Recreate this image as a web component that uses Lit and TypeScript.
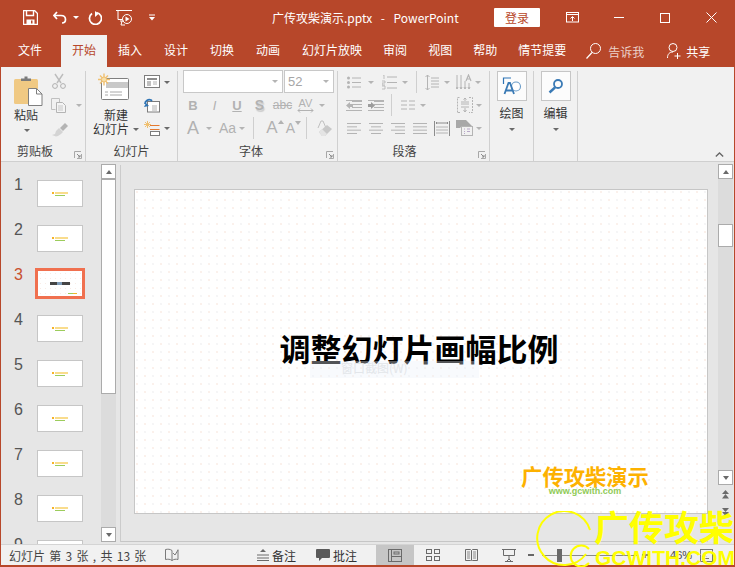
import { LitElement, html, css, svg, unsafeCSS } from 'lit';
import { customElement } from 'lit/decorators.js';

const ic = (w: number, h: number, body: unknown, cls = '') =>
  html`<svg class="ic ${cls}" width=${w} height=${h} viewBox="0 0 ${w} ${h}" fill="none">${body}</svg>`;

const caret = html`<span class="caret"></span>`;
const dim = (m: number) => html`<span class="caret dim m${m}"></span>`;
const at = (m: number, c: unknown) => html`<span class="m${m}">${c}</span>`;
const cell = (w: number, c: unknown) => html`<span class="cell w${w}">${c}</span>`;

// grey lines used by the paragraph buttons
const lines = (x: number, w: number[], step = 3) =>
  w.map((l, i) => svg`<rect x=${x} y=${1 + i * step} width=${l} height="1" fill="#b4b4b4"/>`);

const launcher = html`<svg class="launch" width="8" height="8" viewBox="0 0 8 8" fill="none">
  <path d="M.5 7V.5H7M7.5 3v4.500H3" stroke="#a8a8a8"/><path d="M3 3l3 3M6 4v2H4" stroke="#8a8a8a"/></svg>`;

const TABS = ['插入', '设计', '切换', '动画', '幻灯片放映'];
const TABS2 = ['审阅', '视图', '帮助', '情节提要'];
const THUMBS = [1, 2, 3, 4, 5, 6, 7, 8, 9];

// small spacing and width helpers, m8 = margin-left 8px, w20 = width 20px
const helpers = unsafeCSS(
  Array.from({ length: 80 }, (_, i) => `.m${i}{margin-left:${i}px}.w${i}{width:${i}px}`).join('')
);

@customElement('app-root')
export class AppRoot extends LitElement {
  static styles = css`
    :host {
      display: block;
      width: 735px;
      height: 567px;
      overflow: hidden;
      position: relative;
      font-family: "Noto Sans CJK SC", "Liberation Sans", sans-serif;
      font-size: 12px;
      color: #333;
      background: #e6e6e6;
    }
    ${helpers}
    .win {
      width: 735px;
      height: 567px;
      box-sizing: border-box;
      border: 1px solid #b7472a;
      border-bottom-width: 2px;
      display: flex;
      flex-direction: column;
    }
    svg { display: block; flex: none; }

    /* title bar */
    .title {
      height: 33px;
      background: #b7472a;
      display: flex;
      align-items: center;
      color: #fff;
      flex: none;
    }
    .qat { display: flex; align-items: center; padding-left: 22px; }
    .caret.white { border-top-color: #fff; }
    .doc { margin-left: 117px; font-size: 12px; white-space: pre; width: 200px; word-spacing: 1.6px; }
    .login {
      margin-left: 22px;
      width: 46px;
      height: 19px;
      background: #fff;
      color: #b7472a;
      border-radius: 1px;
      text-align: center;
      line-height: 19px;
      font-size: 12px;
    }
    .winbtn { display: flex; align-items: center; margin-left: 26px; }

    /* tabs */
    .tabs {
      height: 33px;
      background: #b7472a;
      display: flex;
      align-items: flex-end;
      color: #fff;
      flex: none;
      padding-left: 6px;
    }
    .tab { padding: 0 11px; height: 32px; line-height: 30px; white-space: nowrap; }
    .tab.tight { margin-left: -1px; }
    .tab.on { background: #f1f1f1; color: #b7472a; margin-left: 8px; }
    .tabs .tell { display: flex; align-items: center; gap: 7px; height: 32px; margin-left: 9px; color: #ecd2ca; }
    .tabs .share { display: flex; align-items: center; gap: 5px; height: 32px; margin-left: 23px; }

    /* ribbon */
    .ribbon {
      height: 94px;
      background: #f1f1f1;
      border-bottom: 1px solid #cfcfcf;
      display: flex;
      flex: none;
      position: relative;
    }
    .grp {
      position: relative;
      height: 90px;
      margin-top: 4px;
      border-right: 1px solid #d0d0d0;
      box-sizing: border-box;
      display: flex;
      flex-direction: column;
    }
    .grp .body { height: 72px; display: flex; }
    .grp .lbl { text-align: center; line-height: 16px; height: 16px; color: #444; font-size: 12px; }
    .clip .lbl { margin-right: 16px; }
    .font .lbl { margin-right: 18px; }
    .para .lbl { margin-right: 26px; }
    .launch { position: absolute; right: 3px; bottom: 2px; }
    .caret {
      display: inline-block;
      width: 0;
      height: 0;
      border-left: 3px solid transparent;
      border-right: 3px solid transparent;
      border-top: 3px solid #6a6a6a;
      flex: none;
    }
    .caret.dim { border-top-color: #b4b4b4; }

    .clip { width: 85px; }
    .big { display: flex; flex-direction: column; align-items: center; }
    .big .t { line-height: 14px; color: #333; white-space: nowrap; display: flex; align-items: center; gap: 4px; }
    .paste { width: 40px; margin-left: 13px; padding-top: 5px; align-items: flex-start; }
    .paste .t { margin-top: 2px; }
    .paste .caret { margin-top: 7px; margin-left: 10px; }
    .stack { display: flex; flex-direction: column; }
    .clip .stack { margin-left: -3px; padding-top: 2px; gap: 9px; }
    .row { display: flex; align-items: center; gap: 9px; }

    .slides { width: 92px; }
    .newslide { width: 56px; padding-top: 2px; padding-left: 2px; }
    .newslide svg { margin-left: -6px; }
    .newslide .t.first { margin-top: 8px; }
    .slides .stack { padding-top: 4px; gap: 9px; }
    .slides .row { gap: 3px; }
    .slides .row.last { margin-top: -1px; }

    .font { width: 160px; padding-left: 5px; }
    .font .body { flex-direction: column; }
    .combos { display: flex; height: 23px; gap: 1px; margin-top: -1px; }
    .combo {
      background: #fff;
      border: 1px solid #c8c8c8;
      box-sizing: border-box;
      height: 23px;
      display: flex;
      align-items: center;
      justify-content: flex-end;
      padding-right: 4px;
      color: #a6a6a6;
      font-family: "Liberation Sans", sans-serif;
      font-size: 13px;
    }
    .combo.name { width: 100px; }
    .combo.size { width: 50px; justify-content: space-between; padding-left: 3px; }
    .f2 { display: flex; align-items: center; height: 20px; margin-top: 2px; color: #b2b2b2; font-family: "Liberation Sans", sans-serif; font-weight: bold; font-size: 13px; }
    .f3 { display: flex; align-items: center; height: 22px; margin-top: 2px; color: #b2b2b2; font-family: "Liberation Sans", sans-serif; }
    .cell { display: flex; align-items: center; justify-content: center; flex: none; }
    .vsep { width: 1px; background: #cfcfcf; height: 22px; flex: none; }
    .ital { font-style: italic; font-weight: 400; }
    .shad { text-shadow: 1px 2px 1px #ccc; font-size: 14px; }
    .strike { font-weight: 400; font-size: 12px; }
    .av { display: flex; flex-direction: column; align-items: center; font-weight: 400; font-size: 11px; line-height: 10px; }
    .a18 { font-size: 18px; }
    .a17 { font-size: 17px; }
    .a14 { font-size: 14px; }
    .up.tiny { border-bottom-color: #b2b2b2; margin-top: -12px; }
    .dn.tiny { border-top-color: #b2b2b2; margin-top: -10px; }
    .f3 .cm { margin-left: -4px; }

    .para { width: 152px; padding-left: 8px; }
    .para .body { flex-direction: column; }
    .p { display: flex; align-items: center; height: 22px; flex: none; }
    .p.next { margin-top: 1px; }
    .p.in1 { padding-left: 1px; }

    .single { width: 44px; display: flex; flex-direction: column; align-items: center; }
    .tile {
      width: 30px;
      height: 30px;
      box-sizing: border-box;
      background: #fcfcfc;
      border: 1px solid #c6c6c6;
      display: flex;
      align-items: center;
      justify-content: center;
    }
    .single .t { margin-top: 3px; line-height: 18px; color: #333; font-size: 12px; }
    .single .caret { margin-top: 6px; }
    .collapse { position: absolute; right: 10px; bottom: 4px; }

    /* work area */
    .work { flex: 1; display: flex; min-height: 0; background: #e6e6e6; }
    .list { width: 100px; overflow: hidden; flex: none; padding-top: 18px; box-sizing: border-box; }
    .th { height: 45px; display: flex; align-items: flex-start; }
    .th .n {
      width: 36px;
      padding-left: 13px;
      box-sizing: border-box;
      font-family: "Liberation Sans", sans-serif;
      font-size: 16px;
      line-height: 10px;
      color: #555;
    }
    .th .pg {
      width: 46px;
      height: 27px;
      box-sizing: border-box;
      background: #fff;
      border: 1px solid #c6c6c6;
      display: flex;
      flex-direction: column;
      align-items: center;
      justify-content: center;
      gap: 1px;
    }
    .mark { width: 16px; height: 2px; background: linear-gradient(90deg, #f5b428 0 2px, transparent 2px 3px, #f9dc8c 3px 100%); }
    .mark2 { width: 10px; height: 1px; background: #9ccc5c; }
    .th.cur { margin-top: -2px; margin-bottom: 2px; }
    .th.cur .n { color: #c8502f; width: 34px; padding-top: 2px; }
    .th.cur .pg {
      width: 50px;
      height: 31px;
      border: 3px solid #f0704f;
      position: relative;
      background: #fff radial-gradient(#f8ece6 0.5px, transparent 0.7px) 0 0 / 5px 5px;
    }
    .mark3 { width: 20px; height: 3px; background: linear-gradient(90deg, #444 0 7px, #7f9cb8 7px 12px, #444 12px 100%); }
    .mark4 { position: absolute; right: 5px; bottom: 2px; width: 9px; height: 1px; background: linear-gradient(90deg, #9ccc5c 50%, #f0b82c 50%); }

    .sb {
      width: 15px;
      flex: none;
      display: flex;
      flex-direction: column;
      background: #dcdcdc;
    }
    .sbtn {
      height: 15px;
      background: #fff;
      border: 1px solid #ababab;
      box-sizing: border-box;
      display: flex;
      align-items: center;
      justify-content: center;
      flex: none;
    }
    .up { border-left: 3px solid transparent; border-right: 3px solid transparent; border-bottom: 4px solid #6a6a6a; width: 0; height: 0; }
    .dn { border-left: 3px solid transparent; border-right: 3px solid transparent; border-top: 4px solid #6a6a6a; width: 0; height: 0; }
    .thumb { background: #fff; border: 1px solid #ababab; box-sizing: border-box; flex: none; }
    .fill { flex: 1; }
    .panelsb { margin-top: 2px; height: 378px; }
    .panelsb .thumb { height: 215px; }
    .mid {
      flex: 1;
      border-left: 1px solid #cbcbcb;
      border-bottom: 1px solid #c6c6c6;
      margin: 3px 0 2px 4px;
      padding: 24px 0 0 13px;
      display: flex;
      flex-direction: column;
    }
    .slide {
      width: 574px;
      height: 325px;
      box-sizing: border-box;
      border: 1px solid #c6c6c6;
      background:
        radial-gradient(circle at 2px 2px, #f9e9e1 0.6px, transparent 0.9px) 0 0 / 16px 16px,
        radial-gradient(circle at 10px 2px, #f0f0f2 0.6px, transparent 0.9px) 0 0 / 16px 16px,
        radial-gradient(circle at 2px 10px, #f0f0f2 0.6px, transparent 0.9px) 0 0 / 16px 16px,
        radial-gradient(circle at 10px 10px, #f9e9e1 0.6px, transparent 0.9px) 0 0 / 16px 16px,
        #fff;
      position: relative;
      display: flex;
      flex-direction: column;
      align-items: center;
    }
    .head {
      margin-top: 136px;
      font-size: 31px;
      font-weight: 700;
      line-height: 44px;
      color: #000;
      margin-left: -4px;
    }
    .ghost {
      position: absolute;
      left: 175px;
      top: 171px;
      width: 169px;
      height: 17px;
      background: rgba(235, 241, 250, 0.35);
      color: #e3e6ea;
      font-size: 12px;
      line-height: 13px;
      padding-left: 31px;
      box-sizing: border-box;
    }
    .logo { position: absolute; left: 386px; top: 272px; width: 128px; text-align: center; }
    .logo .a { color: #fdb100; font-size: 21.3px; font-weight: 700; line-height: 28px; white-space: nowrap; }
    .logo .b { color: #8fca55; font: bold 9px/9px "Liberation Sans", sans-serif; margin-top: -3px; }
    .rsb { margin: 2px 1px 0 10px; height: 378px; }
    .rsb .thumb { height: 23px; margin-top: 45px; }
    .rsb .pager {
      height: 57px;
      background: #e6e6e6;
      display: flex;
      flex-direction: column;
      align-items: center;
      gap: 9px;
      padding-top: 5px;
      box-sizing: border-box;
      flex: none;
    }

    /* status bar */
    .status {
      height: 21px;
      background: #f1f1f1;
      flex: none;
      display: flex;
      align-items: center;
      color: #444;
      font-size: 11px;
      padding-left: 8px;
      border-top: 1px solid #d4d4d4;
      box-sizing: border-box;
    }
    .status .txt { width: 156px; white-space: pre; font-size: 12px; word-spacing: 1.6px; }
    .status .note { display: flex; align-items: center; gap: 3px; color: #333; font-size: 12px; }
    .vbtn { height: 20px; width: 38px; display: flex; align-items: center; justify-content: center; flex: none; }
    .vbtn.on { background: #c6c6c6; }
    .slider { width: 97px; height: 1px; background: #8a8a8a; position: relative; margin: 0 3px 0 8px; }
    .slider i { position: absolute; left: 15px; top: -6px; width: 5px; height: 13px; background: #6a6a6a; }
    .pct { margin-left: 22px; width: 30px; font: 11px "Liberation Sans", sans-serif; }

    /* watermark that lies over the window */
    .wm { position: absolute; left: 536px; top: 511px; width: 199px; height: 56px; color: #ffff00; pointer-events: none; }
    .wm .ring { position: absolute; left: 0; top: 0; }
    .wm .big1 { position: absolute; left: 58px; top: -10px; font-size: 35px; font-weight: 700; line-height: 50px; white-space: nowrap; }
    .wm .big2 { position: absolute; left: 59px; top: 36px; font: bold 21px/21px "Liberation Sans", sans-serif; white-space: nowrap; }
  `;

  private clipboard() {
    return html`<div class="grp clip"><div class="body">
      <div class="big paste">
        ${ic(29, 30, svg`
          <rect x="0" y="3" width="24" height="25" rx="1.5" fill="#f0c983"/>
          <path d="M7 5V2.5h3.5V0.5h3V2.5H17V5z" fill="#7b7b7b"/>
          <path d="M14.5 12.5h8l5.5 5.5v11.5H14.5z" fill="#fff" stroke="#7f7f7f"/>
          <path d="M22.5 12.5v5.5h5.5" stroke="#7f7f7f"/>`)}
        <span class="t">粘贴</span>${caret}
      </div>
      <div class="stack">
        ${ic(16, 16, svg`<path d="M4 1l6 9M12 1l-6 9" stroke="#bcbcbc" stroke-width="1.4"/><circle cx="4" cy="13" r="2.4" stroke="#b0b0b0"/><circle cx="12" cy="13" r="2.4" stroke="#b0b0b0"/>`)}
        <div class="row">
          ${ic(16, 15, svg`<path d="M.5.5h8l0 4M.5.5v11h4" stroke="#c0c0c0"/><path d="M5.5 4.5h6l3 3v7h-9z" fill="#f4f4f4" stroke="#b4b4b4"/><path d="M7 8h5M7 10h5M7 12h5" stroke="#c8c8c8"/>`)}
          <span class="caret dim"></span>
        </div>
        ${ic(17, 15, svg`<path d="M9 6l5-5 3 3-5 5z" fill="#b4b4b4"/><path d="M8 6l4 4-2 2-3 2-2 .5-4-1.5 3-1 1-3z" fill="#d4d4d4"/>`)}
      </div>
    </div><div class="lbl">剪贴板</div>${launcher}</div>`;
  }

  private slideGroup() {
    return html`<div class="grp slides"><div class="body">
      <div class="big newslide">
        ${ic(31, 27, svg`
          <rect x="3.5" y="5.5" width="27" height="21" rx="1" fill="#fff" stroke="#7f7f7f"/>
          <rect x="8" y="9" width="22" height="6" fill="#c9c9c9"/>
          <path d="M7 19h3M12 19h12M7 22h3M12 22h12" stroke="#a8a8a8"/>
          <g stroke="#f0c070" stroke-width="1.4"><path d="M6 .5v12M0 6.500h12M2 2.500l8 8M10 2.500l-8 8"/></g>
          <circle cx="6" cy="6.500" r="2.500" fill="#f8dfa8" stroke="#f0c070"/>`)}
        <span class="t first">新建</span>
        <span class="t">幻灯片 ${caret}</span>
      </div>
      <div class="stack">
        <div class="row">
          ${ic(17, 14, svg`<rect x=".5" y=".5" width="15" height="12" fill="#fff" stroke="#7c7c7c"/><rect x="3" y="3" width="10" height="2" fill="#8c8c8c"/><rect x="3" y="6" width="4" height="5" fill="#c0c0c0"/><path d="M9 7h4M9 9h4" stroke="#b0b0b0"/>`)}
          <span class="caret"></span>
        </div>
        ${ic(17, 15, svg`<rect x="3.500" y="3.500" width="12" height="10.500" fill="#fff" stroke="#7c7c7c"/><path d="M8 8h5M8 10h5M8 12h5" stroke="#b0b0b0"/><path d="M1 6c0-3 3-5 6-4l1 1" stroke="#2e74b5" stroke-width="1.800"/><path d="M0 9l5-1-3-3z" fill="#2e74b5"/>`)}
        <div class="row last">
          ${ic(17, 15, svg`<path d="M3.500 0v7M0 3.500h7M1 1l5 5M6 1l-5 5" stroke="#f0c070"/><path d="M6 4.500h9.500M6 8.500h9.500" stroke="#e57a30" stroke-width="1.200"/><rect x="6.500" y="10.500" width="9" height="4" fill="#fff" stroke="#7c7c7c"/>`)}
          <span class="caret"></span>
        </div>
      </div>
    </div><div class="lbl">幻灯片</div></div>`;
  }

  private fontGroup() {
    return html`<div class="grp font"><div class="body">
      <div class="combos">
        <div class="combo name"><span class="caret dim"></span></div>
        <div class="combo size"><span>52</span><span class="caret dim"></span></div>
      </div>
      <div class="f2">
        ${cell(20, 'B')}
        ${cell(23, html`<span class="ital">I</span>`)}
        ${cell(22, html`<u>U</u>`)}
        ${cell(23, html`<span class="shad">S</span>`)}
        ${cell(23, html`<s class="strike">abc</s>`)}
        ${cell(23, html`<span class="av">AV
          ${ic(17, 5, svg`<path d="M1 2.500h15M3 .5L1 2.500l2 2M14 .5l2 2-2 2" stroke="#b2b2b2"/>`)}</span>`)}
        ${dim(2)}
      </div>
      <div class="f3">
        ${cell(20, html`<span class="a18">A</span>`)}
        ${dim(3)}
        ${cell(31, html`<span class="a14">Aa</span>`)}
        <span class="caret dim cm"></span>
        <span class="vsep m8"></span>
        <span class="cell w20 m11"><span class="a17">A</span><span class="up tiny"></span></span>
        <span class="cell w13 m2"><span class="a14">A</span><span class="dn tiny"></span></span>
        <span class="vsep m6"></span>
        ${at(9, ic(16, 16, svg`<path d="M2 8l3-7 2 0 3 7" stroke="#c0c0c0"/><path d="M3 12l8-7 5 4-7 7H6z" fill="#c8c8c8"/><path d="M3 12l3-3 5 5-2 2H6z" fill="#e4e4e4"/>`))}
      </div>
    </div><div class="lbl">字体</div>${launcher}</div>`;
  }

  private paraGroup() {
    const bullets = ic(14, 13, svg`<circle cx="1.500" cy="2" r="1.500" fill="#b4b4b4"/><circle cx="1.500" cy="6.500" r="1.500" fill="#b4b4b4"/><circle cx="1.500" cy="11" r="1.500" fill="#b4b4b4"/><path d="M5 2h9M5 6.500h9M5 11h9" stroke="#b4b4b4"/>`);
    const numbered = ic(15, 15, svg`<path d="M5 2h10M5 7.500h10M5 13h10" stroke="#b4b4b4"/><path d="M1 0h1v4M0 6h3v2H0v2h3M0 11h3v3H0" stroke="#b4b4b4" stroke-width=".8"/>`);
    const spacing = ic(14, 17, svg`<path d="M2.500 1v15M.5 3l2-2 2 2M.5 14l2 2 2-2" stroke="#b4b4b4"/><path d="M6 4h8M6 7h8M6 10h8M6 13h8" stroke="#b4b4b4"/>`);
    const direction = ic(16, 17, svg`<path d="M1 1v14M5 1v14M9 7v8M0 13l1 2 1-2M4 13l1 2 1-2M8 13l1 2 1-2" stroke="#b4b4b4"/><path d="M10 7l2.500-6 2.500 6M11 5h3" stroke="#b4b4b4" stroke-width="1.200"/><path d="M13 9v6M12 13l1 2 1-2" stroke="#b4b4b4"/>`);
    const outdent = ic(16, 11, svg`${lines(6, [10, 10, 10, 10])}<rect x="0" y="0" width="16" height="1" fill="#b4b4b4"/><rect x="0" y="10" width="16" height="1" fill="#b4b4b4"/><path d="M0 5.500L4 2v2h3v3H4v2z" fill="#b4b4b4"/>`);
    const indent = ic(16, 11, svg`${lines(6, [10, 10, 10, 10])}<rect x="0" y="0" width="16" height="1" fill="#b4b4b4"/><rect x="0" y="10" width="16" height="1" fill="#b4b4b4"/><path d="M7 5.500L3 2v2H0v3h3v2z" fill="#9c9c9c"/>`);
    const cols = ic(14, 10, svg`<path d="M0 1h6M8 1h6M0 5h6M8 5h6M0 9h6M8 9h6" stroke="#b4b4b4"/>`);
    const valign = ic(16, 16, svg`<path d="M.5 15.500V.5h3M12 .5h3.500v15H12M3 15.500H.5" stroke="#b4b4b4" stroke-dasharray="2 1"/><path d="M4 5h8M4 7h8M4 10h8M8 1v3M6.500 2.500L8 1l1.500 1.500M8 15v-4M6.500 13L8 15l1.500-2" stroke="#b4b4b4"/>`);
    const al = (w: number[], x: number[]) => ic(15, 11, w.map((l, i) => svg`<rect x=${x[i]} y=${i * 3.33} width=${l} height="1" fill="#b4b4b4"/>`));
    const dist = ic(16, 15, svg`<path d="M.5 0v15M15.500 0v15" stroke="#8c8c8c"/><path d="M3 2h10M3 1l-1 1 1 1M13 1l1 1-1 1" stroke="#8c8c8c"/><path d="M2 6h12M2 9h12M2 12h12" stroke="#b4b4b4"/>`);
    const art = ic(17, 16, svg`<path d="M0 0h10l6 6H6L4 8H0z" fill="#a8a8a8"/><rect x="5.500" y="6.500" width="11" height="9" fill="#f1f1f1" stroke="#b4b4b4"/><path d="M8 9h1M11 9h3M8 11.500h1M11 11.500h3M8 13.500h1" stroke="#b8a8c8"/>`);
    return html`<div class="grp para"><div class="body">
      <div class="p in1">
        ${bullets}${dim(7)}${at(8, numbered)}${dim(5)}
        <span class="vsep m8"></span>
        ${at(8, spacing)}${dim(5)}
        ${at(6, direction)}${dim(3)}
      </div>
      <div class="p next">
        ${outdent}${at(6, indent)}
        <span class="vsep m7"></span>
        ${at(9, cols)}${dim(5)}
        ${at(31, valign)}${dim(3)}
      </div>
      <div class="p next in1">
        ${al([14, 10, 14, 10], [0, 0, 0, 0])}
        ${at(7, al([14, 10, 14, 10], [0, 2, 0, 2]))}
        ${at(7, al([14, 10, 14, 10], [0, 4, 0, 4]))}
        ${at(7, al([14, 14, 14, 14], [0, 0, 0, 0]))}
        ${at(6, dist)}
        ${at(6, art)}${dim(3)}
      </div>
    </div><div class="lbl">段落</div>${launcher}</div>`;
  }

  render() {
    return html`
      <div class="win">
        <div class="title">
          <div class="qat">
            ${ic(15, 15, svg`<path d="M.5.5h11l3 3v11H.5z" stroke="#fff" stroke-width="1.400"/><path d="M3.500 1v4.500h7V1" stroke="#fff" stroke-width="1.400"/><rect x="3.500" y="9.500" width="8" height="5" fill="#fff"/><rect x="8" y="10.500" width="1.500" height="3" fill="#b7472a"/>`)}
            ${at(15, ic(14, 13, svg`<path d="M4 1L1 4.500 4 8" stroke="#fff" stroke-width="1.700"/><path d="M1.500 4.500H8c3 0 4.500 2 4.500 4S11 12 9 12" stroke="#fff" stroke-width="1.700"/>`))}
            <span class="caret white m6"></span>
            ${at(9, ic(14, 14, svg`<path d="M4 2.500A6 6 0 1 0 8.500 1.500" stroke="#fff" stroke-width="1.700"/><path d="M7 0v6l3.500-3z" fill="#fff"/>`))}
            ${at(14, ic(17, 16, svg`<path d="M0 .5h16M2 .5v9h4" stroke="#fff"/><path d="M4 11h4M5 15h4M6 11l-1 4" stroke="#fff"/><circle cx="11" cy="9" r="4.500" stroke="#fff"/><path d="M9.500 6.500v5l4-2.500z" fill="#fff"/>`))}
            ${at(16, ic(6, 7, svg`<path d="M0 1h6" stroke="#fff"/><path d="M0 3h6L3 6.500z" fill="#fff"/>`))}
          </div>
          <div class="doc">广传攻柴演示.pptx  -  PowerPoint</div>
          <div class="login">登录</div>
          <div class="winbtn">
            ${ic(13, 11, svg`<rect x=".5" y=".5" width="12" height="9.500" stroke="#fff"/><path d="M.5 2.500h12" stroke="#fff"/><path d="M6.500 9V5M4.500 6.500l2-2 2 2" stroke="#fff"/>`)}
            ${at(35, ic(10, 1, svg`<rect width="10" height="1" fill="#fff"/>`))}
            ${at(36, ic(10, 10, svg`<rect x=".5" y=".5" width="9" height="9" stroke="#fff"/>`))}
            ${at(36, ic(11, 11, svg`<path d="M.5.5l10 10M10.500.5l-10 10" stroke="#fff"/>`))}
          </div>
        </div>
        <div class="tabs">
          <div class="tab">文件</div>
          <div class="tab on">开始</div>
          ${TABS.map(t => html`<div class="tab">${t}</div>`)}
          ${TABS2.map(t => html`<div class="tab tight">${t}</div>`)}
          <div class="tell">
            ${ic(15, 16, svg`<circle cx="9.500" cy="5.500" r="5" stroke="#fff"/><path d="M6 9.500L.5 15.500" stroke="#fff" stroke-width="1.200"/>`)}
            <span>告诉我</span>
          </div>
          <div class="share">
            ${ic(14, 16, svg`<circle cx="6" cy="4.500" r="4" stroke="#fff"/><path d="M.5 15c0-4 2-6 5.500-6" stroke="#fff"/><path d="M10.500 10v6M7.500 13h6" stroke="#fff"/>`)}
            <span>共享</span>
          </div>
        </div>
        <div class="ribbon">
          ${this.clipboard()}
          ${this.slideGroup()}
          ${this.fontGroup()}
          ${this.paraGroup()}
          <div class="grp single">
            <div class="tile">${ic(20, 18, svg`<path d="M1.500 7V1H9" stroke="#2e74b5" stroke-width="1.200"/><circle cx="14" cy="9.500" r="4.500" fill="#fff" stroke="#6a9cc8" stroke-width="1.100"/><path d="M2.500 17L6.500 6h1.500l4 11M4 13.500h7" stroke="#3a7ab5" stroke-width="1.800"/>`)}</div>
            <span class="t">绘图</span>${caret}
          </div>
          <div class="grp single">
            <div class="tile">${ic(16, 16, svg`<circle cx="10" cy="6" r="4" stroke="#3a7ab5" stroke-width="1.800"/><path d="M7 9.500L1.500 14.500" stroke="#3a7ab5" stroke-width="2.400"/>`)}</div>
            <span class="t">编辑</span>${caret}
          </div>
          <div class="collapse">${ic(9, 5, svg`<path d="M.8 4.500L4.500 1l3.700 3.500" stroke="#666" stroke-width="1.300"/>`)}</div>
        </div>
        <div class="work">
          <div class="list">
            ${THUMBS.map(n => n === 3
              ? html`<div class="th cur"><span class="n">${n}</span><div class="pg"><span class="mark3"></span><span class="mark4"></span></div></div>`
              : html`<div class="th"><span class="n">${n}</span><div class="pg"><span class="mark"></span><span class="mark2"></span></div></div>`)}
          </div>
          <div class="sb panelsb">
            <div class="sbtn"><span class="up"></span></div>
            <div class="thumb"></div>
            <div class="fill"></div>
            <div class="sbtn"><span class="dn"></span></div>
          </div>
          <div class="mid">
            <div class="slide">
              <div class="ghost">窗口截图(W)</div>
              <div class="head">调整幻灯片画幅比例</div>
              <div class="logo">
                <div class="a">广传攻柴演示</div>
                <div class="b">www.gcwith.com</div>
              </div>
            </div>
          </div>
          <div class="sb rsb">
            <div class="sbtn"><span class="up"></span></div>
            <div class="thumb"></div>
            <div class="fill"></div>
            <div class="sbtn"><span class="dn"></span></div>
            <div class="pager">
              ${ic(7, 9, svg`<path d="M0 4L3.500 0 7 4zM0 8.500h7L3.500 4z" fill="#6a6a6a"/>`)}
              ${ic(7, 9, svg`<path d="M0 0h7L3.500 4zM0 4h7L3.500 8z" fill="#6a6a6a"/>`)}
            </div>
          </div>
        </div>
        <div class="status">
          <span class="txt">幻灯片 第 3 张 , 共 13 张</span>
          ${ic(14, 14, svg`<path d="M7 2.500C5 1 3 1 .5 1.500v10c2.500-.5 4.500-.5 6.500 1 2-1.500 4-1.500 6-1V1.500" stroke="#7a7a7a"/><path d="M7 2.500v10M8 5l2 2 3-5" stroke="#7a7a7a"/>`)}
          <span class="note m78">
            ${ic(12, 12, svg`<path d="M3 3l3-3 3 3z" fill="#6a6a6a"/><path d="M0 6h12M0 9h12M0 11.500h12" stroke="#6a6a6a"/>`)}备注
          </span>
          <span class="note m20">
            ${ic(14, 14, svg`<path d="M1 1h12a1 1 0 0 1 1 1v7a1 1 0 0 1-1 1H6l-3 3v-3H1a1 1 0 0 1-1-1V2a1 1 0 0 1 1-1z" fill="#5a5a5a"/>`)}批注
          </span>
          <div class="vbtn on m19">${ic(14, 13, svg`<rect x=".5" y=".5" width="13" height="12" stroke="#6a6a6a"/><path d="M3.500 .5v12M3.500 7.500h10" stroke="#6a6a6a"/><rect x="6" y="3" width="5" height="2" stroke="#6a6a6a"/>`)}</div>
          <div class="vbtn">${ic(14, 12, svg`<rect x=".5" y=".5" width="5" height="4" stroke="#6a6a6a"/><rect x="8.500" y=".5" width="5" height="4" stroke="#6a6a6a"/><rect x=".5" y="7.500" width="5" height="4" stroke="#6a6a6a"/><rect x="8.500" y="7.500" width="5" height="4" stroke="#6a6a6a"/>`)}</div>
          <div class="vbtn">${ic(13, 12, svg`<path d="M.5.5h5l1 1 1-1h5v11h-5l-1 .5-1-.5h-5zM6.500 1.500v10" stroke="#6a6a6a"/><path d="M2 3h3M2 5h3M2 7h3M2 9h3M8 3h3M8 5h3M8 7h3M8 9h3" stroke="#8a8a8a"/>`)}</div>
          <div class="vbtn">${ic(14, 13, svg`<path d="M0 .5h14M1.500 .5v6h11v-6" stroke="#6a6a6a"/><path d="M7 7v3M3 12.500h8M7 10l-2 2M7 10l2 2" stroke="#6a6a6a"/>`)}</div>
          ${ic(6, 2, svg`<rect width="6" height="2" fill="#666"/>`)}
          <div class="slider"><i></i></div>
          ${ic(6, 6, svg`<path d="M3 0v6M0 3h6" stroke="#666" stroke-width="1.500"/>`)}
          <span class="pct">46%</span>
          ${ic(13, 13, svg`<rect x=".5" y=".5" width="12" height="12" stroke="#777"/><path d="M9 9.500H4.500V6M3 7.500l1.500-1.500L6 7.500" stroke="#777"/>`)}
        </div>
      </div>
      <div class="wm">
        ${ic(199, 56, svg`
          <path d="M54 19A27 27 0 1 0 50 43" stroke="#ff0" stroke-width="2" fill="none"/>
          <path d="M53 38A10.500 10.500 0 1 0 53 52" stroke="#ff0" stroke-width="2" fill="none"/>`, 'ring')}
        <div class="big1">广传攻柴</div>
        <div class="big2">GCWITH.COM</div>
      </div>
    `;
  }
}
